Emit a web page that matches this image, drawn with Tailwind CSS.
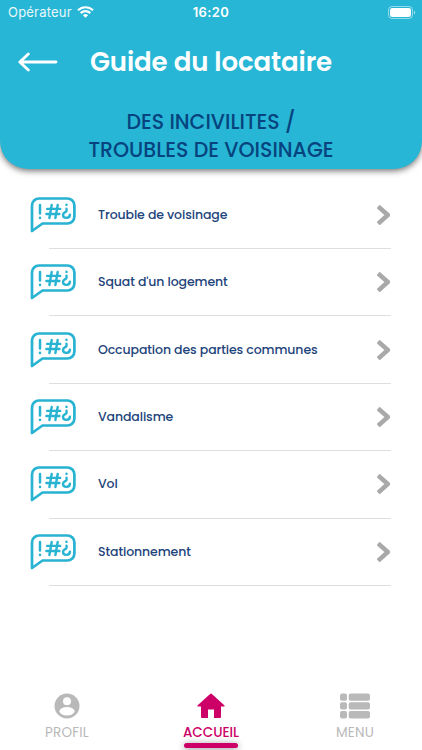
<!DOCTYPE html>
<html lang="fr">

<head>
  <meta charset="UTF-8" />
  <title>Guide du locataire</title>
  <meta name="viewport" content="width=device-width, initial-scale=1" />
  <script src="https://cdn.jsdelivr.net/npm/@tailwindcss/browser@4"></script>
</head>

<body class="bg-white h-[750px] flex flex-col overflow-hidden font-[Poppins,Inter,sans-serif]">
  <!-- shared icons -->
  <svg class="hidden">
    <symbol id="bubble" viewBox="0 0 46 36">
      <g fill="none" stroke="#27b3d1" stroke-linecap="round" stroke-linejoin="round">
        <path stroke-width="2.7" d="M2 34V8.500a7 7 0 0 1 7-7H37.400a7 7 0 0 1 7 7v11a7 7 0 0 1-7 7H12.500z" />
        <path stroke-width="2.500" d="M10 8v8.600M10 20.700v.2" />
        <path stroke-width="2.400" d="M21.700 8l-2.300 13M27.700 8l-2.300 13M17.200 11.900h13M16.400 17h13" />
        <path stroke-width="2.400" d="M36.500 7.700v.2M36.500 11.700v2.200c0 1.300-3.500 1.400-3.500 3.900 0 2 1.500 3.100 3.400 3.100 2.100 0 3.500-1.200 3.500-3.300" />
      </g>
    </symbol>
    <symbol id="chevron" viewBox="0 0 14 20">
      <path d="M2.800 2.900L10.800 10l-8 7.200" fill="none" stroke="#a9a9a9" stroke-width="4.500" stroke-linecap="square" stroke-linejoin="round" />
    </symbol>
  </svg>

  <header class="h-[169px] shrink-0 bg-[#27b6d5] rounded-b-[28px] shadow-[0_2px_6px_rgba(0,0,0,0.55)]">
    <div class="h-6 grid grid-cols-3 items-center pl-2 pr-2 text-white text-[13px] leading-6 font-[Inter,sans-serif]">
      <div class="flex items-center gap-[5px]">
        <span class="tracking-[0.2px] text-white/90">Opérateur</span>
        <svg class="w-[17px] h-3" viewBox="0 0 17 12" fill="none" stroke="#fff" stroke-width="2.200">
          <path d="M1 4.300a10.700 10.700 0 0 1 15 0M3.700 7.100a6.800 6.800 0 0 1 9.600 0" />
          <path d="M8.500 11.800L5.900 9.200a3.700 3.700 0 0 1 5.200 0z" fill="#fff" stroke="none" />
        </svg>
      </div>
      <span class="text-center font-semibold tracking-[0.4px]">16:20</span>
      <svg class="w-7 h-[13px] -mr-[2px] justify-self-end" viewBox="0 0 28 13">
        <rect x=".5" y=".5" width="24" height="12" rx="3.500" fill="none" stroke="#fff" stroke-opacity=".5" />
        <rect x="2" y="2" width="21" height="9" rx="2.200" fill="#fff" />
        <path d="M26 4.500c1.800.6 1.800 3.400 0 4z" fill="#fff" fill-opacity=".5" />
      </svg>
    </div>
    <div class="h-[76px] flex items-center pl-[18px]">
      <svg class="w-10 h-5 shrink-0" viewBox="0 0 40 20" fill="none" stroke="#fff" stroke-width="2.800" stroke-linecap="round"
        stroke-linejoin="round">
        <path d="M38 10H2M10.300 2L1.800 10l8.500 8" />
      </svg>
      <h1 class="ml-8 text-white text-[26px] font-semibold tracking-[-0.1px] whitespace-nowrap">Guide du locataire</h1>
    </div>
    <h2 class="pt-2 text-center text-[#06437f] text-[20.5px] leading-7 font-medium">DES INCIVILITES /<br />TROUBLES DE VOISINAGE</h2>
  </header>

  <ul class="mt-[12.6px] ml-[49px] mr-[31px] grow text-[12.5px] font-medium tracking-[-0.1px] text-[#1d447b]">
    <li class="h-[67.4px] flex items-center border-b border-[#dedede]">
      <svg class="w-[46px] h-9 -ml-[19px] shrink-0"><use href="#bubble" /></svg>
      <span class="ml-[22px] pt-px grow">Trouble de voisinage</span>
      <svg class="w-[14px] h-5"><use href="#chevron" /></svg>
    </li>
    <li class="h-[67.4px] flex items-center border-b border-[#dedede]">
      <svg class="w-[46px] h-9 -ml-[19px] shrink-0"><use href="#bubble" /></svg>
      <span class="ml-[22px] pt-px grow">Squat d'un logement</span>
      <svg class="w-[14px] h-5"><use href="#chevron" /></svg>
    </li>
    <li class="h-[67.4px] flex items-center border-b border-[#dedede]">
      <svg class="w-[46px] h-9 -ml-[19px] shrink-0"><use href="#bubble" /></svg>
      <span class="ml-[22px] pt-px grow">Occupation des parties communes</span>
      <svg class="w-[14px] h-5"><use href="#chevron" /></svg>
    </li>
    <li class="h-[67.4px] flex items-center border-b border-[#dedede]">
      <svg class="w-[46px] h-9 -ml-[19px] shrink-0"><use href="#bubble" /></svg>
      <span class="ml-[22px] pt-px grow">Vandalisme</span>
      <svg class="w-[14px] h-5"><use href="#chevron" /></svg>
    </li>
    <li class="h-[67.4px] flex items-center border-b border-[#dedede]">
      <svg class="w-[46px] h-9 -ml-[19px] shrink-0"><use href="#bubble" /></svg>
      <span class="ml-[22px] pt-px grow">Vol</span>
      <svg class="w-[14px] h-5"><use href="#chevron" /></svg>
    </li>
    <li class="h-[67.4px] flex items-center border-b border-[#dedede]">
      <svg class="w-[46px] h-9 -ml-[19px] shrink-0"><use href="#bubble" /></svg>
      <span class="ml-[22px] pt-px grow">Stationnement</span>
      <svg class="w-[14px] h-5"><use href="#chevron" /></svg>
    </li>
  </ul>

  <nav class="h-[62px] shrink-0 flex justify-between pl-[27px] pr-[27px] text-[13.5px] leading-5 text-[#b9b9b9]">
    <a class="w-20 flex flex-col items-center">
      <svg class="w-[26px] h-[26px] mt-[5px]" viewBox="0 0 26 26">
        <circle cx="13" cy="13" r="12.500" fill="#b9b9b9" />
        <circle cx="13" cy="8.300" r="4" fill="#fff" />
        <ellipse cx="13" cy="18.200" rx="7.500" ry="4.200" fill="#fff" />
      </svg>
      <span class="mt-1 tracking-[0.2px]">PROFIL</span>
    </a>
    <a class="w-20 flex flex-col items-center font-medium text-[#cc0066]">
      <svg class="w-7 h-[26px] mt-[5px]" viewBox="0 0 28 26" fill="#cc0066">
        <path d="M13.100.9a1.300 1.300 0 0 1 1.800 0L27.300 12.200c.6.600.3 1.300-.5 1.300H24V24a1 1 0 0 1-1 1h-6v-8.500h-6V25H5a1 1 0 0 1-1-1V13.500H1.200c-.8 0-1.100-.7-.5-1.300z" />
      </svg>
      <span class="mt-1">ACCUEIL</span>
      <span class="w-[54px] h-[5px] shrink-0 rounded-full bg-[#cc0066] shadow-[0_1px_7px_rgba(0,0,0,0.45)]"></span>
    </a>
    <a class="w-20 flex flex-col items-center">
      <svg class="w-[30px] h-[26px] mt-[5px]" viewBox="0 0 30 26" fill="#b9b9b9">
        <rect y=".5" width="7" height="7.300" rx="2" />
        <rect x="8.700" y=".5" width="21.300" height="7.300" rx="2" />
        <rect y="9.300" width="7" height="7.300" rx="2" />
        <rect x="8.700" y="9.300" width="21.300" height="7.300" rx="2" />
        <rect y="18.100" width="7" height="7.300" rx="2" />
        <rect x="8.700" y="18.100" width="21.300" height="7.300" rx="2" />
      </svg>
      <span class="mt-1 tracking-[0.2px]">MENU</span>
    </a>
  </nav>
</body>

</html>
